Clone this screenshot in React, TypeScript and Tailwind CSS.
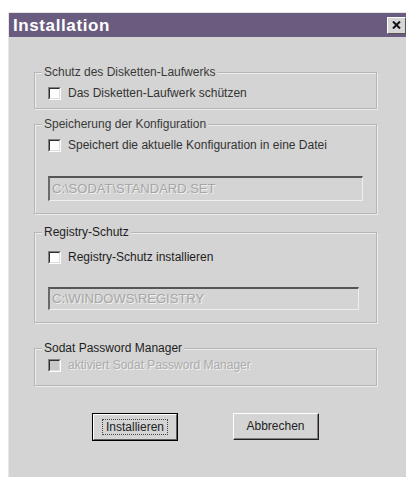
import React from "react";

const font = { fontFamily: '"Liberation Sans", Arial, sans-serif' };

function CheckBox({ disabled = false }: { disabled?: boolean }) {
  return (
    <span
      className={`block w-[13px] h-[13px] shrink-0 border-t border-l border-t-[#808080] border-l-[#808080] border-b border-r border-b-white border-r-white ${
        disabled ? "bg-[#c8c8c8]" : "bg-white"
      }`}
    >
      <span className="block w-full h-full border-t border-l border-t-[#303030] border-l-[#303030] border-b border-r border-b-[#dcdcdc] border-r-[#dcdcdc]" />
    </span>
  );
}

function Group({
  label,
  className,
  children,
  strong = false,
}: {
  label: string;
  className: string;
  children?: React.ReactNode;
  strong?: boolean;
}) {
  return (
    <div
      className={`relative ml-[25px] mr-[29px] border border-[#b6b6b6] shadow-[inset_1px_1px_0_#ececec,1px_1px_0_#ececec] ${className}`}
    >
      <span
        className={`absolute left-[7px] -top-[8px] bg-[#d4d4d4] px-[2px] text-[12px] leading-[14px] ${
          strong ? "text-[#1e1e1e]" : "text-[#3a3a3a]"
        }`}
      >
        {label}
      </span>
      {children}
    </div>
  );
}

function Field({ value, className }: { value: string; className: string }) {
  return (
    <div
      className={`ml-[13px] border-t-2 border-l-2 border-t-[#555] border-l-[#6a6a6a] border-b border-r border-b-[#efefef] border-r-[#efefef] bg-[#d4d4d4] flex items-center pl-[2px] ${className}`}
    >
      <span className="text-[13px] text-[#a6a6a6] [text-shadow:1px_1px_0_#f0f0f0]">{value}</span>
    </div>
  );
}

export default function App() {
  return (
    <div className="w-[406px] h-[477px] bg-white overflow-hidden" style={font}>
      <div className="ml-[8px] mt-[12px] w-[398px] h-[465px] bg-[#d4d4d4] border-t border-l border-[#e6e6e6] flex flex-col">
        {/* title bar */}
        <div className="h-[24px] bg-[#6a5c7f] flex items-center justify-between pl-[4px]">
          <span className="text-white font-bold text-[17px] tracking-[0.6px] leading-none">Installation</span>
          <span className="w-[19px] h-[17px] bg-[#d6d6d6] border-t border-l border-white border-b border-r border-b-[#555] border-r-[#555] flex items-center justify-center">
            <svg width="9" height="8" viewBox="0 0 9 8">
              <path d="M1 0.5 L8 7.5 M8 0.5 L1 7.5" stroke="#111" strokeWidth="2" />
            </svg>
          </span>
        </div>

        {/* floppy protection */}
        <Group label="Schutz des Disketten-Laufwerks" className="mt-[35px] h-[37px]">
          <div className="flex items-center gap-[7px] ml-[13px] mt-[13px]">
            <CheckBox />
            <span className="text-[12px] text-[#333] leading-[14px]">Das Disketten-Laufwerk schützen</span>
          </div>
        </Group>

        {/* configuration */}
        <Group label="Speicherung der Konfiguration" className="mt-[15px] h-[90px]">
          <div className="flex items-center gap-[7px] ml-[13px] mt-[13px]">
            <CheckBox />
            <span className="text-[12px] text-[#333] leading-[14px]">Speichert die aktuelle Konfiguration in eine Datei</span>
          </div>
          <Field value="C:\SODAT\STANDARD.SET" className="mt-[24px] w-[315px] h-[25px]" />
        </Group>

        {/* registry */}
        <Group label="Registry-Schutz" strong className="mt-[18px] h-[91px]">
          <div className="flex items-center gap-[7px] ml-[13px] mt-[17px]">
            <CheckBox />
            <span className="text-[12px] text-[#1e1e1e] leading-[14px]">Registry-Schutz installieren</span>
          </div>
          <Field value="C:\WINDOWS\REGISTRY" className="mt-[23px] w-[311px] h-[23px]" />
        </Group>

        {/* password manager */}
        <Group label="Sodat Password Manager" strong className="mt-[25px] h-[38px]">
          <div className="flex items-center gap-[7px] ml-[13px] mt-[9px]">
            <CheckBox disabled />
            <span className="text-[12px] text-[#ababab] leading-[14px] [text-shadow:1px_1px_0_#f2f2f2]">
              aktiviert Sodat Password Manager
            </span>
          </div>
        </Group>

        {/* buttons */}
        <div className="flex mt-[27px] ml-[83px] gap-[55px]">
          <button className="w-[86px] h-[28px] border border-black bg-[#d4d4d4] p-0">
            <span className="flex w-full h-full items-center justify-center border-t border-l border-white border-b border-r border-b-[#606060] border-r-[#606060]">
              <span className="border border-dotted border-[#444] px-[3px] text-[12px] text-[#222] leading-[14px]">
                Installieren
              </span>
            </span>
          </button>
          <button className="w-[86px] h-[27px] bg-[#d4d4d4] border-t border-l border-white border-b border-r border-b-[#222] border-r-[#222] p-0">
            <span className="flex w-full h-full items-center justify-center border-b border-r border-b-[#808080] border-r-[#808080] text-[12px] text-[#222]">
              Abbrechen
            </span>
          </button>
        </div>
      </div>
    </div>
  );
}
